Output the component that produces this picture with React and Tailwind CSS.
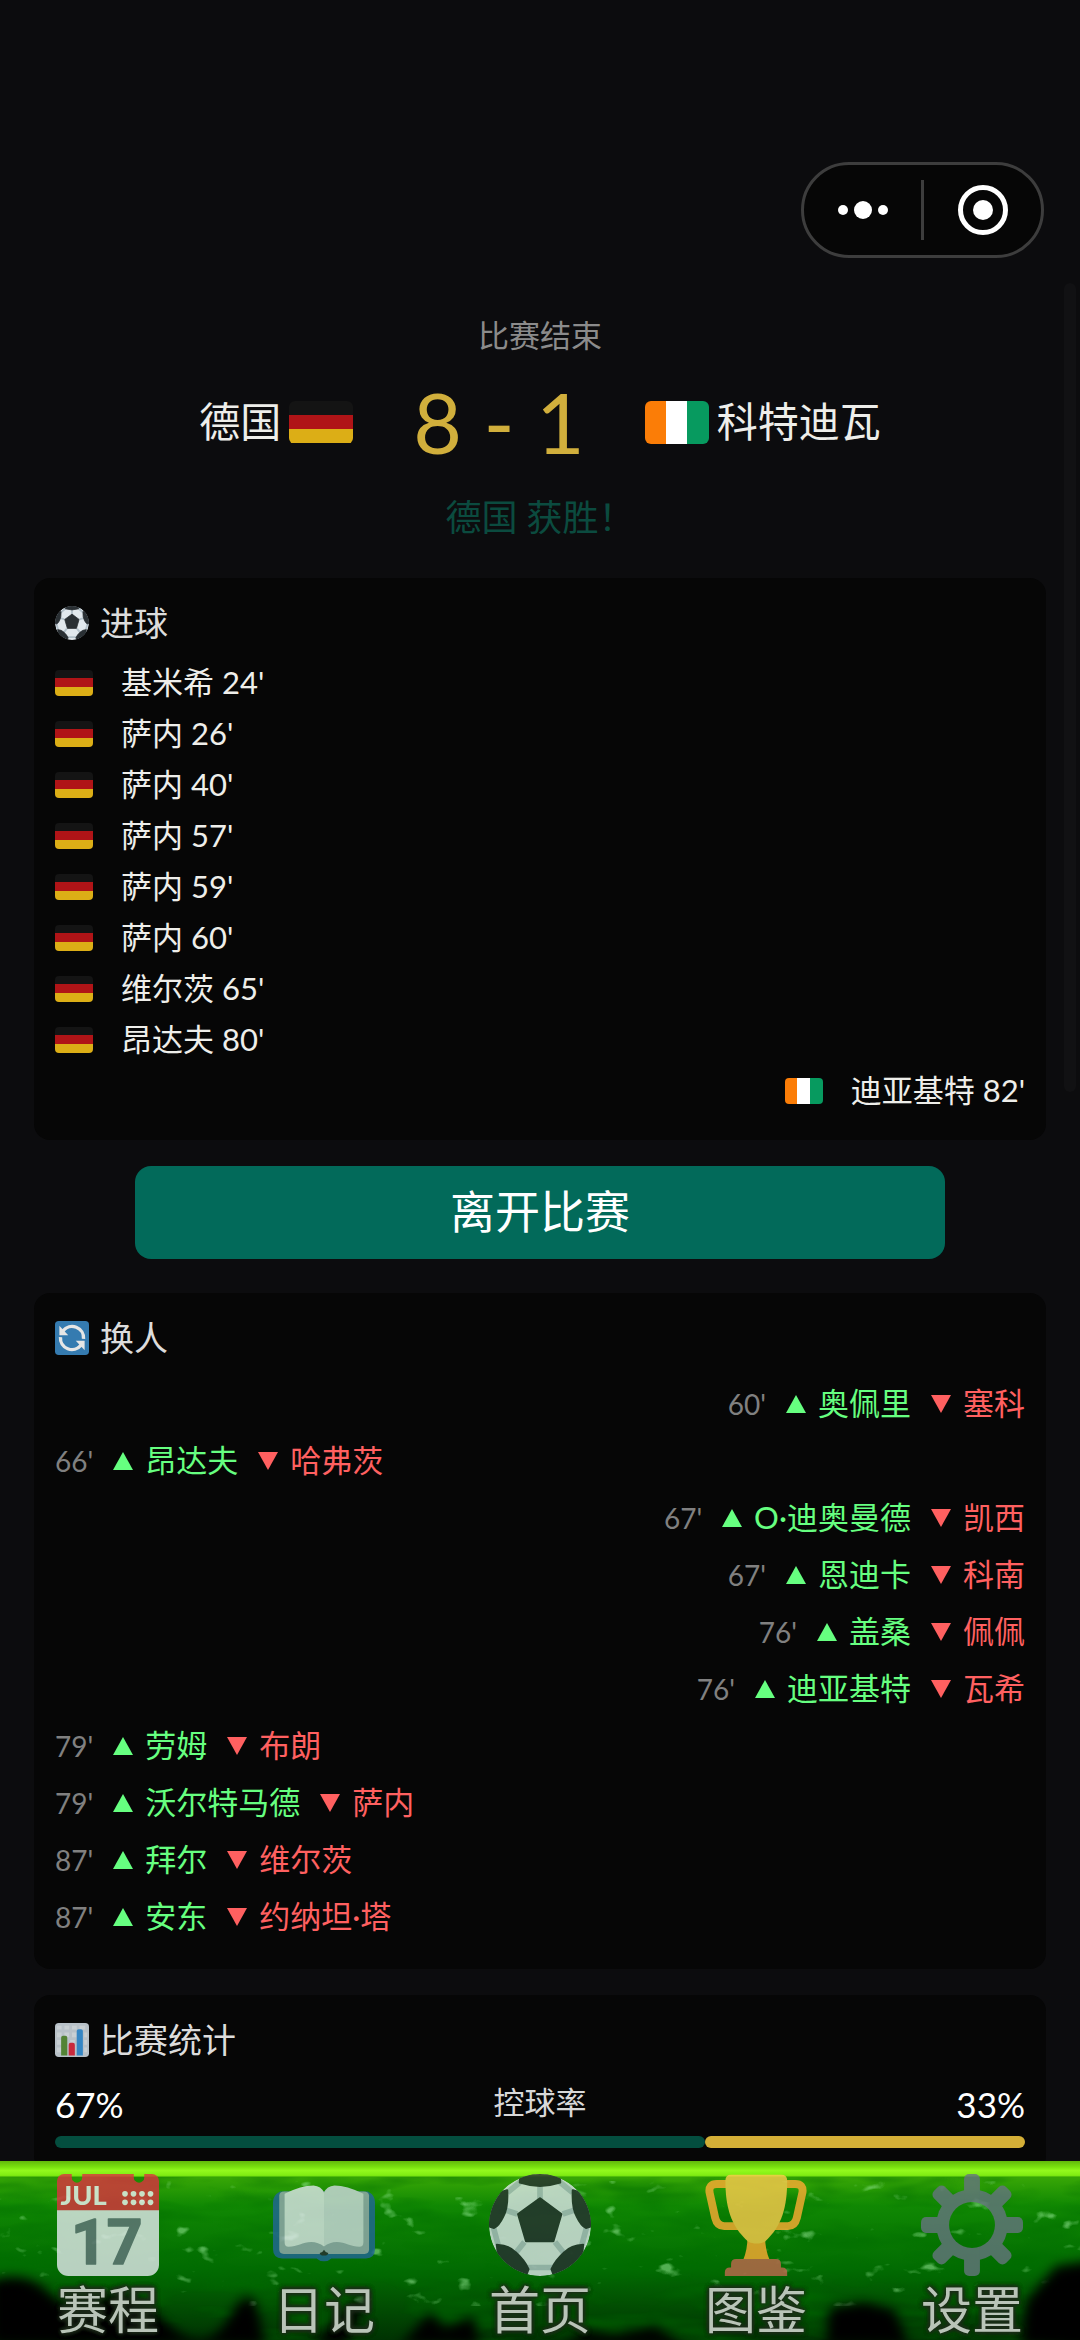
const goals = [
  { side: "home", name: "基米希", minute: 24 },
  { side: "home", name: "萨内", minute: 26 },
  { side: "home", name: "萨内", minute: 40 },
  { side: "home", name: "萨内", minute: 57 },
  { side: "home", name: "萨内", minute: 59 },
  { side: "home", name: "萨内", minute: 60 },
  { side: "home", name: "维尔茨", minute: 65 },
  { side: "home", name: "昂达夫", minute: 80 },
  { side: "away", name: "迪亚基特", minute: 82 },
]

const substitutions = [
  { side: "away", minute: 60, on: "奥佩里", off: "塞科" },
  { side: "home", minute: 66, on: "昂达夫", off: "哈弗茨" },
  { side: "away", minute: 67, on: "O·迪奥曼德", off: "凯西" },
  { side: "away", minute: 67, on: "恩迪卡", off: "科南" },
  { side: "away", minute: 76, on: "盖桑", off: "佩佩" },
  { side: "away", minute: 76, on: "迪亚基特", off: "瓦希" },
  { side: "home", minute: 79, on: "劳姆", off: "布朗" },
  { side: "home", minute: 79, on: "沃尔特马德", off: "萨内" },
  { side: "home", minute: 87, on: "拜尔", off: "维尔茨" },
  { side: "home", minute: 87, on: "安东", off: "约纳坦·塔" },
]

const stats = [{ label: "控球率", home: 67, away: 33 }]

const Flag = ({ side, className }) => {
  if (side === "home") {
    return (
      <span className={`flex shrink-0 flex-col overflow-hidden ${className}`}>
        <span className="flex-1 bg-[#141414]" />
        <span className="flex-1 bg-[#b01417]" />
        <span className="flex-1 bg-[#dcae16]" />
      </span>
    )
  }
  return (
    <span className={`flex shrink-0 overflow-hidden ${className}`}>
      <span className="flex-1 bg-[#fb7d07]" />
      <span className="flex-1 bg-white" />
      <span className="flex-1 bg-[#079a5f]" />
    </span>
  )
}

const BallIcon = ({ className }) => (
  <svg viewBox="0 0 36 36" className={className} aria-hidden="true">
    <defs>
      <clipPath id="ball-clip">
        <circle cx="18" cy="18" r="18" />
      </clipPath>
    </defs>
    <g clipPath="url(#ball-clip)">
      <circle cx="18" cy="18" r="18" fill="#e1e8ed" />
      <path
        d="M18 3v6M5 12.5l5 1.6M31 12.5l-5 1.6M12.5 24l-4 5M23.3 24l4 5M1.6 19l1.6 6M34.4 19l-1.6 6M13 33h10M6.5 6.5l5-4M29.5 6.5l-5-4"
        stroke="#b3c1ca"
        strokeWidth="2"
        fill="none"
      />
      <g fill="#292f33" stroke="#292f33" strokeWidth="0.8" strokeLinejoin="round">
        <path d="M18 8.6l7.5 5.6-2.8 9.5h-9.6l-2.8-9.5z" />
        <path d="M10.9 3L11 1.5 18-1l7 2.5.1 1.5Q18 5.300 10.900 3z" />
        <path d="M6.400 5.800Q6.700 12 5 15 3.400 18.300 1.800 19L0 18.500-1 8z" />
        <path d="M29.600 5.800Q29.300 12 31 15 32.600 18.300 34.200 19L36 18.500 37 8z" />
        <path d="M2.800 25Q7 25.200 9.300 27.600 12.500 30.500 13.900 33.600L13 36H4z" />
        <path d="M33.200 25Q29 25.200 26.700 27.600 23.500 30.500 22.100 33.600L23 36h9z" />
      </g>
    </g>
  </svg>
)

const SwapIcon = ({ className }) => (
  <svg viewBox="0 0 36 36" className={className} aria-hidden="true">
    <rect width="36" height="36" rx="4" fill="#3b88c3" />
    <g fill="none" stroke="#fff" strokeWidth="3.6">
      <path d="M8.500 10.400A12.200 12.200 0 0 1 30.200 19" />
      <path d="M27.500 25.600A12.200 12.200 0 0 1 5.800 17" />
    </g>
    <path d="M4.600 5v10h9.400z" fill="#fff" />
    <path d="M31.400 31V21h-9.400z" fill="#fff" />
  </svg>
)

const ChartIcon = ({ className }) => (
  <svg viewBox="0 0 36 36" className={className} aria-hidden="true">
    <rect width="36" height="36" rx="4" fill="#ccd6dd" />
    <path
      d="M2 3h5v4H2zM10 3h5v4h-5zM18 3h5v4h-5zM26 3h6v4h-6zM2 10h5v5H2zM10 10h5v5h-5zM18 10h5v5h-5zM2 18h5v5H2zM16 18h5v3h-5zM2 26h5v5H2zM31 10h3v5h-3zM31 18h3v5h-3zM31 26h3v5h-3z"
      fill="#dde5ea"
    />
    <path d="M6.500 34.500V15.500a2 2 0 0 1 2-2H11a2 2 0 0 1 2 2v19z" fill="#5c913b" />
    <path d="M14.500 34.500V23a2 2 0 0 1 2-2H19a2 2 0 0 1 2 2v11.500z" fill="#dd2e44" />
    <path d="M23 34.500V8.500a2 2 0 0 1 2-2h2.500a2 2 0 0 1 2 2v26z" fill="#3b94d9" />
  </svg>
)

const CalendarIcon = ({ className }) => (
  <svg viewBox="0 0 36 36" className={className} aria-hidden="true">
    <path d="M0 12h36v20a4 4 0 0 1-4 4H4a4 4 0 0 1-4-4z" fill="#e6ebf0" />
    <path
      d="M0 12.800V2.500a2.500 2.500 0 0 1 2.500-2.500H5.200v1.200a1.850 1.850 0 0 0 3.700 0V0H27.100v1.200a1.850 1.850 0 0 0 3.700 0V0h2.700A2.500 2.500 0 0 1 36 2.500v10.300z"
      fill="#dd3340"
    />
    <g fill="#f4f7f9">
      <circle cx="24" cy="7" r="1" />
      <circle cx="27" cy="7" r="1" />
      <circle cx="30" cy="7" r="1" />
      <circle cx="33" cy="7" r="1" />
      <circle cx="24" cy="10" r="1" />
      <circle cx="27" cy="10" r="1" />
      <circle cx="30" cy="10" r="1" />
      <circle cx="33" cy="10" r="1" />
    </g>
    <text x="9.4" y="11" textAnchor="middle" fontSize="9.6" className="fill-[#f4f7f9] font-[Lato] font-black">
      JUL
    </text>
    <text
      x="17.6"
      y="31.800"
      textAnchor="middle"
      fontSize="22"
      strokeWidth="0.6"
      strokeLinejoin="round"
      className="fill-[#66757f] stroke-[#66757f] font-[Roboto] font-bold"
    >
      17
    </text>
  </svg>
)

const BookIcon = ({ className }) => (
  <svg viewBox="0 0 36 36" className={className} aria-hidden="true">
    <path
      d="M2.500 6.200h31Q36 7.500 36 10v16.500q0 3.300-3.200 3.300H20.600q-1 1-2.600 1t-2.600-1H3.200Q0 29.800 0 26.500V10Q0 7.500 2.500 6.200z"
      fill="#226699"
    />
    <path d="M2.200 7.600Q2.300 6.200 4 6.200h28q1.800 0 1.900 1.400v19q0 1.600-1.600 1.600H3.800q-1.600 0-1.600-1.600z" fill="#99aab5" />
    <path
      d="M4.100 7Q10 4.100 14.300 4.100 17 4.300 18 6.600v19Q16 24 13.500 24c-3 0-5 1.700-8 1.700q-1.400 0-1.400-1.600z"
      fill="#e1e8ed"
    />
    <path
      d="M31.900 7Q26 4.100 21.700 4.100 19 4.300 18 6.600v19Q20 24 22.500 24c3 0 5 1.700 8 1.700q1.400 0 1.400-1.600z"
      fill="#d2dce2"
    />
    <path d="M18 26.700q.5 1 1.500 1.200 0 .9-1.500.9t-1.500-.9Q17.500 27.700 18 26.700z" fill="#292f33" />
  </svg>
)

const TrophyIcon = ({ className }) => (
  <svg viewBox="0 0 36 36" className={className} aria-hidden="true">
    <g fill="none" stroke="#ffac33" strokeWidth="2.800">
      <path d="M9 3.500H4.200Q1.200 3.500 1.600 6.500L3.600 15.500Q4.300 18.400 6.800 18.400H14" />
      <path d="M27 3.500h4.800q3 0 2.600 3l-2 9q-.7 2.900-3.200 2.900H22" />
    </g>
    <path d="M15 22h6.200q0 5 1.700 8.500H13.400Q15 27 15 22z" fill="#ffac33" />
    <path
      d="M7.200 2.300Q7.200.3 9.200.3h17.700Q29 .3 29 2.300c0 9-1.700 16-7.800 21.500-1.700 1-4.300 1-6 0C8.900 18.300 7.200 11.300 7.200 2.300z"
      fill="#ffcc4d"
    />
    <path
      d="M11 30h14q1.800 0 1.800 1.800V33h.4q1.800 0 1.800 1.700V36H7v-1.300Q7 33 8.800 33h.4v-1.200Q9.200 30 11 30z"
      fill="#c1694f"
    />
  </svg>
)

const GearIcon = ({ className }) => (
  <svg viewBox="0 0 36 36" className={className} aria-hidden="true">
    <defs>
      <mask id="gear-hole">
        <rect width="36" height="36" fill="#fff" />
        <circle cx="18" cy="18" r="8.100" fill="#000" />
      </mask>
    </defs>
    <g fill="#66757f" mask="url(#gear-hole)">
      <circle cx="18" cy="18" r="12.600" />
      {[0, 45, 90, 135].map((angle) => (
        <rect key={angle} x="15.200" y="0" width="5.600" height="36" rx="1.800" transform={`rotate(${angle} 18 18)`} />
      ))}
    </g>
  </svg>
)

const Triangle = ({ down }) => (
  <svg viewBox="0 0 20 18" className="h-[18px] w-5 shrink-0" aria-hidden="true">
    <path d={down ? "M0 0h20L10 18z" : "M0 18h20L10 0z"} className={down ? "fill-[#ff6060]" : "fill-[#66ff80]"} />
  </svg>
)

const Card = ({ icon, title, children }) => (
  <section className="rounded-2xl bg-[#060606] px-[21px] pt-5 pb-6">
    <h2 className="flex items-center gap-[11px] text-[34px] leading-[50px] text-[#dcdcdc]">
      {icon}
      {title}
    </h2>
    {children}
  </section>
)

// Soft grass texture under the tab bar
const Grass = () => (
  <svg
    viewBox="0 0 1080 179"
    preserveAspectRatio="none"
    className="absolute inset-0 -z-10 h-full w-full"
    aria-hidden="true"
  >
    <defs>
      <linearGradient id="grass" x1="0" y1="0" x2="0" y2="1">
        <stop offset="0" stopColor="#36a506" />
        <stop offset="0.1" stopColor="#36a506" />
        <stop offset="0.25" stopColor="#108803" />
        <stop offset="0.6" stopColor="#026c02" />
        <stop offset="0.85" stopColor="#014802" />
        <stop offset="1" stopColor="#003202" />
      </linearGradient>
      <linearGradient id="glow" x1="0" y1="0" x2="0" y2="1">
        <stop offset="0" stopColor="#62b80b" />
        <stop offset="0.35" stopColor="#77df0d" />
        <stop offset="0.6" stopColor="#92f91d" />
        <stop offset="0.9" stopColor="#7fec12" />
        <stop offset="1" stopColor="#3fa808" />
      </linearGradient>
      <filter id="shade" x="0" y="0" width="100%" height="100%">
        <feTurbulence type="fractalNoise" baseFrequency="0.012 0.045" numOctaves="3" seed="8" />
        <feColorMatrix values="0 0 0 0 0  0 0 0 0 0.15  0 0 0 0 0  2 0 0 0 -0.800" />
      </filter>
      <filter id="fleck" x="0" y="0" width="100%" height="100%">
        <feTurbulence type="fractalNoise" baseFrequency="0.035 0.06" numOctaves="3" seed="21" />
        <feColorMatrix values="0 0 0 0 0.3  0 0 0 0 0.8  0 0 0 0 0.3  0 7 0 0 -4.800" />
      </filter>
      <filter id="soft">
        <feGaussianBlur stdDeviation="6" />
      </filter>
    </defs>
    <rect width="1080" height="179" fill="url(#grass)" />
    <rect y="16" width="1080" height="163" filter="url(#shade)" opacity="0.700" />
    <rect y="20" width="1080" height="125" filter="url(#fleck)" opacity="0.550" />
    <g fill="#000500" filter="url(#soft)">
      <path d="M-10 120Q25 108 50 132T100 138 165 160 230 155 262 172 330 166 345 185H-10z" />
      <path d="M400 185l30-34 14 16 30-12 6 30z" />
      <path d="M560 185l25-16 30 4 40-8 30 20z" />
      <path d="M825 185l5-38 34-6 30 8 16 36z" />
      <path d="M1020 185l6-45 30-35 40-6v90z" />
    </g>
    <rect width="1080" height="16" fill="url(#glow)" />
  </svg>
)

const tabs = [
  { label: "赛程", Icon: CalendarIcon },
  { label: "日记", Icon: BookIcon },
  { label: "首页", Icon: BallIcon },
  { label: "图鉴", Icon: TrophyIcon },
  { label: "设置", Icon: GearIcon },
]

const TabBar = () => (
  <nav className="relative isolate z-10 flex shrink-0 pt-[13px]">
    <Grass />
    {tabs.map(({ label, Icon }) => (
      <a key={label} href="#" className="flex flex-1 flex-col items-center gap-1">
        <Icon className="size-[102px] opacity-80" />
        <span className="text-[51px] leading-[60px] text-[#b9c4b8] [text-shadow:0_0_5px_#1d2b1a,0_0_5px_#1d2b1a,0_0_5px_#1d2b1a,0_0_5px_#1d2b1a]">
          {label}
        </span>
      </a>
    ))}
  </nav>
)

const App = () => {
  return (
    <div
      lang="zh-CN"
      className="relative flex h-screen flex-col overflow-hidden bg-[#0c0c0e] font-[Lato,'Noto_Sans_CJK_SC',sans-serif] text-[#eeeeea]"
    >
      <header className="flex shrink-0 justify-end pt-[162px] pr-9 pb-[22px]">
        <div className="flex h-24 w-[243px] items-center rounded-full border-3 border-[#3d3d3d] bg-[#060606]">
          <button type="button" aria-label="更多" className="flex h-full flex-1 items-center justify-center gap-1.5">
            <span className="size-2.5 rounded-full bg-white" />
            <span className="size-[18px] rounded-full bg-white" />
            <span className="size-2.5 rounded-full bg-white" />
          </button>
          <span className="h-[60px] w-[3px] bg-[#3d3d3d]" />
          <button type="button" aria-label="关闭" className="flex h-full flex-1 items-center justify-center">
            <span className="flex size-[50px] items-center justify-center rounded-full border-5 border-white">
              <span className="size-5 rounded-full bg-white" />
            </span>
          </button>
        </div>
      </header>

      <span className="absolute top-[283px] right-1 h-[809px] w-3 rounded-full bg-[#111113]" />

      <main className="min-h-0 flex-1 overflow-hidden px-[34px] pt-8">
        <div className="text-center">
          <p className="text-[31px] leading-[46px] text-[#8b8b8b]">比赛结束</p>
          <div className="mt-3.5 flex items-center justify-center gap-[60px]">
            <div className="flex items-center gap-2 text-[41px] leading-[60px]">
              德国
              <Flag side="home" className="h-[43px] w-16 rounded-md" />
            </div>
            <p className="text-[84px] leading-[100px] text-[#d1af3c]">8 - 1</p>
            <div className="flex items-center gap-2 text-[41px] leading-[60px]">
              <Flag side="away" className="h-[43px] w-16 rounded-md" />
              科特迪瓦
            </div>
          </div>
          <p className="mt-[19px] text-[36px] leading-[52px] text-[#0b4b3f]">德国 获胜！</p>
        </div>

        <div className="mt-[35px]">
          <Card icon={<BallIcon className="size-[34px]" />} title="进球">
            <ul className="mt-[9px]">
              {goals.map((goal, i) => (
                <li
                  key={i}
                  className={`flex h-[51px] items-center gap-7 text-[31px] ${goal.side === "away" ? "justify-end" : ""}`}
                >
                  <Flag side={goal.side} className="h-[26px] w-[38px] rounded" />
                  <span>
                    {goal.name} {goal.minute}'
                  </span>
                </li>
              ))}
            </ul>
          </Card>
        </div>

        <div className="mt-[26px] px-[101px]">
          <button type="button" className="h-[93px] w-full rounded-2xl bg-[#026a5a] text-[45px] text-white">
            离开比赛
          </button>
        </div>

        <div className="mt-[34px] flex flex-col gap-[26px]">
          <Card icon={<SwapIcon className="size-[34px] opacity-90" />} title="换人">
            <ul className="mt-3">
              {substitutions.map((sub, i) => (
                <li
                  key={i}
                  className={`flex h-[57px] items-center text-[31px] ${sub.side === "away" ? "justify-end" : ""}`}
                >
                  <span className="text-[28px] text-[#808080]">{sub.minute}'</span>
                  <span className="ml-5 flex items-center gap-3 text-[#66ff80]">
                    <Triangle />
                    {sub.on}
                  </span>
                  <span className="ml-5 flex items-center gap-3 text-[#ff6060]">
                    <Triangle down />
                    {sub.off}
                  </span>
                </li>
              ))}
            </ul>
          </Card>

          <Card icon={<ChartIcon className="size-[34px] opacity-90" />} title="比赛统计">
            {stats.map((stat) => (
              <div key={stat.label} className="mt-[14px]">
                <div className="flex items-start justify-between text-[35px] leading-[50px] text-white">
                  <span>{stat.home}%</span>
                  <span className="text-[31px] leading-[46px] text-[#d8d8d8]">{stat.label}</span>
                  <span>{stat.away}%</span>
                </div>
                <div className="mt-[7px] flex h-3">
                  <div className="rounded-full bg-[#044e3f]" style={{ width: `${stat.home}%` }} />
                  <div className="rounded-full bg-[#d4af37]" style={{ width: `${stat.away}%` }} />
                </div>
              </div>
            ))}
          </Card>
        </div>
      </main>

      <TabBar />
    </div>
  )
}

export default App
